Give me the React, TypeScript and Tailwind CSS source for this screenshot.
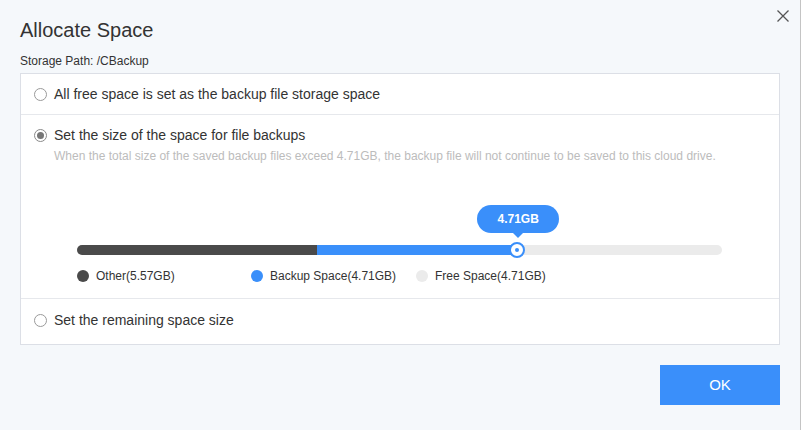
import { useState } from "react";

type Mode = "all" | "size" | "remaining";

const legend = [
  { label: "Other(5.57GB)", dot: "bg-[#4a4a4a]", width: "w-[174px]" },
  { label: "Backup Space(4.71GB)", dot: "bg-[#3a8ffa]", width: "w-[165px]" },
  { label: "Free Space(4.71GB)", dot: "bg-[#ebebeb]", width: "w-auto" },
];

function Radio({ checked }: { checked: boolean }) {
  return (
    <span
      className={
        "flex size-[13px] shrink-0 items-center justify-center rounded-full border bg-white " +
        (checked ? "border-[#8a8a8a]" : "border-[#9a9a9a]")
      }
    >
      {checked ? <span className="size-[7px] rounded-full bg-[#777]" /> : null}
    </span>
  );
}

export default function App() {
  const [mode, setMode] = useState<Mode>("size");
  const otherPct = 37.2;
  const backupPct = 31;

  return (
    <div className="relative h-[430px] w-[801px] border-r border-[#c4c4c4] bg-[#f5f8fb] px-[20px] pt-[18px] font-['Liberation_Sans',Arial,sans-serif] text-[#333]">
      <button type="button" className="absolute right-[11px] top-[10px] text-[#555]" aria-label="Close">
        <svg width="12" height="12" viewBox="0 0 12 12" fill="none" stroke="currentColor" strokeWidth="1.3">
          <path d="M0.5 0.5L11.5 11.5M11.5 0.5L0.5 11.5" />
        </svg>
      </button>

      <h1 className="text-[20px] leading-[24px] font-normal">Allocate Space</h1>
      <p className="mt-[11px] text-[12px] leading-[16px]">Storage Path: /CBackup</p>

      <div className="mt-[4px] border border-[#dcdfe6] bg-white">
        <label className="flex h-[41px] cursor-pointer items-center gap-[7px] border-b border-[#e6e8ec] pl-[13px] text-[14px]" onClick={() => setMode("all")}>
          <Radio checked={mode === "all"} />
          <span>All free space is set as the backup file storage space</span>
        </label>

        <div className="border-b border-[#e6e8ec] pb-[14px] pt-[10px]">
          <label className="flex cursor-pointer items-center gap-[7px] pl-[13px] text-[14px] leading-[20px]" onClick={() => setMode("size")}>
            <Radio checked={mode === "size"} />
            <span>Set the size of the space for file backups</span>
          </label>
          <p className="mt-[3px] pl-[33px] text-[12px] leading-[16px] text-[#bcbcbc]">
            When the total size of the saved backup files exceed 4.71GB, the backup file will not continue to be saved to this cloud drive.
          </p>

          <div className="ml-[56px] mr-[57px] mt-[81px]">
            <div className="relative h-[10px] rounded-full bg-[#ebebeb]">
              <div className="flex h-full overflow-hidden rounded-full">
                <div className="h-full bg-[#4a4a4a]" style={{ width: `${otherPct}%` }} />
                <div className="h-full bg-[#3a8ffa]" style={{ width: `${backupPct}%` }} />
              </div>
              <div
                className="absolute top-1/2 flex size-[16px] -translate-x-1/2 -translate-y-1/2 items-center justify-center rounded-full border-2 border-[#3a8ffa] bg-white"
                style={{ left: `${otherPct + backupPct}%` }}
              >
                <span className="size-[4px] rounded-full bg-[#3a8ffa]" />
              </div>
              <div
                className="absolute bottom-[17px] flex -translate-x-1/2 flex-col items-center"
                style={{ left: `${otherPct + backupPct + 0.2}%` }}
              >
                <div className="flex h-[28px] w-[82px] items-center justify-center rounded-full bg-[#3a8ffa] text-[12px] font-bold text-white">
                  4.71GB
                </div>
                <div className="h-0 w-0 border-x-[5px] border-t-[5px] border-x-transparent border-t-[#3a8ffa]" />
              </div>
            </div>

            <div className="mt-[13px] flex items-center text-[12px] leading-[16px]">
              {legend.map((item) => (
                <div key={item.label} className={"flex items-center gap-[7px] " + item.width}>
                  <span className={"size-[12px] rounded-full " + item.dot} />
                  <span>{item.label}</span>
                </div>
              ))}
            </div>
          </div>
        </div>

        <label className="flex h-[45px] cursor-pointer items-center gap-[7px] pb-[2px] pl-[13px] text-[14px]" onClick={() => setMode("remaining")}>
          <Radio checked={mode === "remaining"} />
          <span>Set the remaining space size</span>
        </label>
      </div>

      <div className="mt-[20px] flex justify-end">
        <button type="button" className="h-[40px] w-[120px] bg-[#3a8ffa] text-[15px] text-white">
          OK
        </button>
      </div>
    </div>
  );
}
